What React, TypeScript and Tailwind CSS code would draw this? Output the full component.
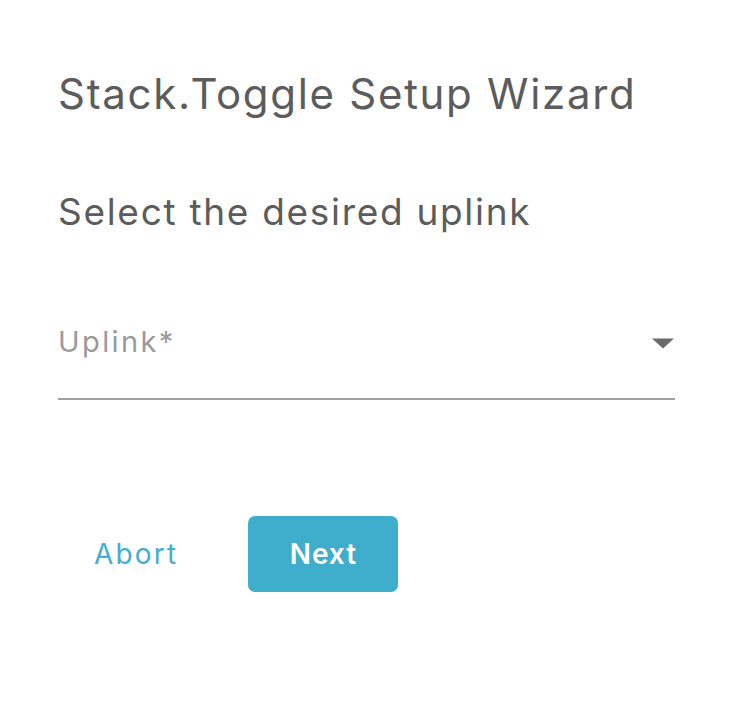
const App = () => {
  return (
    <div className="min-h-[706px] w-[750px] bg-white" style={{ fontFamily: 'Inter, "Noto Sans", sans-serif' }}>
      <div className="pl-[58px] pr-[75px] pt-[70px]">
        <h1 className="text-[42px] leading-[48px] tracking-[1.7px] text-[#5c5c5c]">Stack.Toggle Setup Wizard</h1>
        <h2 className="mt-[72px] text-[37px] leading-[44px] tracking-[1.7px] text-[#5c5c5c]">Select the desired uplink</h2>
        <div className="mt-[92px] flex h-[74px] items-start justify-between border-b-2 border-[#a0a0a0]">
          <span className="text-[29px] leading-[32px] tracking-[2.4px] text-[#9a9a9a]">Uplink*</span>
          <svg width="24" height="11" viewBox="0 0 24 11" className="mt-[12px]">
            <path d="M1 0.5 L23 0.5 L12 10.5 Z" fill="#6b6b6b" />
          </svg>
        </div>
        <div className="mt-[116px] flex items-center">
          <button className="ml-[36px] text-[28px] tracking-[2.2px] text-[#46acd0]">Abort</button>
          <button className="ml-[70px] h-[76px] w-[150px] rounded-[7px] bg-[#3fadcc] text-[28px] font-semibold tracking-[1px] text-white">
            Next
          </button>
        </div>
      </div>
    </div>
  );
};

export default App;
